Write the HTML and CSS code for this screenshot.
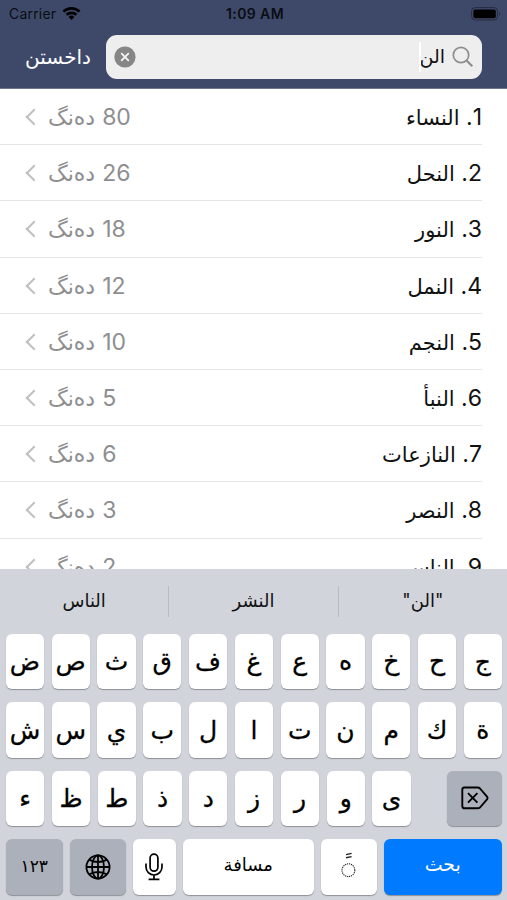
FILE: index.html
```
<!DOCTYPE html>
<html lang="ckb" dir="rtl">
<head>
  <meta charset="utf-8">
  <title>Search</title>
  <link rel="stylesheet" href="styles.css">
</head>
<body>
  <div class="phone">
    <!-- Header: status bar and search -->
    <header>
      <div class="status" dir="ltr">
        <div class="carrier">
          <span>Carrier</span>
          <svg width="19" height="15" viewBox="0 0 19 15">
            <path d="M9.5 14 L6.6 10.9 A4.2 4.2 0 0 1 12.4 10.9 Z" fill="#000"/>
            <path d="M4.6 8.8 A7 7 0 0 1 14.4 8.8" fill="none" stroke="#000" stroke-width="2.7"/>
            <path d="M1.5 5.6 A11.4 11.4 0 0 1 17.5 5.6" fill="none" stroke="#000" stroke-width="2.7"/>
          </svg>
        </div>
        <div class="time">1:09 AM</div>
        <div class="battery">
          <svg width="30" height="14" viewBox="0 0 30 14">
            <rect x="0.6" y="0.6" width="26" height="12.4" rx="3.6" fill="none" stroke="#252b40"/>
            <rect x="2.4" y="2.4" width="22.4" height="8.8" rx="1.8" fill="#000"/>
            <path d="M28 4.8 Q29.6 6.8 28 8.8 Z" fill="#252b40"/>
          </svg>
        </div>
      </div>
      <div class="search">
        <div class="field">
          <svg class="glass" width="22" height="22" viewBox="0 0 22 22">
            <circle cx="9" cy="9" r="7.7" fill="none" stroke="#8e8e90" stroke-width="1.7"/>
            <path d="M14.5 14.5 L20.3 20.3" stroke="#8e8e90" stroke-width="2.2"/>
          </svg>
          <span class="query">الن</span>
          <span class="caret"></span>
          <svg class="clear" width="22" height="22" viewBox="0 0 22 22">
            <circle cx="11" cy="11" r="10.6" fill="#868686"/>
            <path d="M7.2 7.2 L14.8 14.8 M14.8 7.2 L7.2 14.8" stroke="#f4f4f4" stroke-width="1.8"/>
          </svg>
        </div>
        <span class="cancel">داخستن</span>
      </div>
    </header>

    <!-- Results -->
    <ul class="list">
      <li><span>1. <b>النساء</b></span><span class="count">80 <b>دەنگ</b></span></li>
      <li><span>2. <b>النحل</b></span><span class="count">26 <b>دەنگ</b></span></li>
      <li><span>3. <b>النور</b></span><span class="count">18 <b>دەنگ</b></span></li>
      <li><span>4. <b>النمل</b></span><span class="count">12 <b>دەنگ</b></span></li>
      <li><span>5. <b>النجم</b></span><span class="count">10 <b>دەنگ</b></span></li>
      <li><span>6. <b>النبأ</b></span><span class="count">5 <b>دەنگ</b></span></li>
      <li><span>7. <b>النازعات</b></span><span class="count">6 <b>دەنگ</b></span></li>
      <li><span>8. <b>النصر</b></span><span class="count">3 <b>دەنگ</b></span></li>
      <li><span>9. <b>الناس</b></span><span class="count">2 <b>دەنگ</b></span></li>
    </ul>

    <!-- Keyboard -->
    <div class="keyboard">
      <div class="suggestions">
        <span>"الن"</span><span>النشر</span><span>الناس</span>
      </div>
      <div class="keys">
        <i>ج</i><i>ح</i><i>خ</i><i>ه</i><i>ع</i><i>غ</i><i>ف</i><i>ق</i><i>ث</i><i>ص</i><i>ض</i>
      </div>
      <div class="keys">
        <i>ة</i><i>ك</i><i>م</i><i>ن</i><i>ت</i><i>ا</i><i>ل</i><i>ب</i><i>ي</i><i>س</i><i>ش</i>
      </div>
      <div class="keys">
        <i class="dark delete">
          <svg width="28" height="24" viewBox="0 0 28 24" fill="none" stroke="#000" stroke-width="1.9" stroke-linejoin="round">
            <path d="M3.5 1.5 H16.5 Q18 1.5 19 2.5 L26 10.6 Q27 12 26 13.4 L19 21.5 Q18 22.3 16.5 22.3 H3.5 Q1.3 22.3 1.3 20 V3.8 Q1.3 1.5 3.5 1.5 Z"/>
            <path d="M7 7.2 L16.4 16.6 M16.4 7.2 L7 16.6"/>
          </svg>
        </i>
        <i>ى</i><i>و</i><i>ر</i><i>ز</i><i>د</i><i>ذ</i><i>ط</i><i>ظ</i><i>ء</i>
      </div>
      <div class="keys bottom">
        <i class="go">بحث</i>
        <i class="marks">
          <svg width="16" height="30" viewBox="0 0 16 30" fill="none" stroke="#222">
            <path d="M5 2.6 L10.6 1.4 M5 5.8 L10.6 4.6" stroke-width="1.4"/>
            <circle cx="7.4" cy="18.2" r="6.4" stroke-width="1.1" stroke-dasharray="1.2 0.8"/>
          </svg>
        </i>
        <i class="space">مسافة</i>
        <i class="mic">
          <svg width="18" height="28" viewBox="0 0 18 28" fill="none" stroke="#000" stroke-width="1.7">
            <rect x="5.1" y="1.2" width="7.8" height="17" rx="3.9"/>
            <path d="M1 10.4 V14 A8 8 0 0 0 17 14 V10.4 M9 22 V26.4 M3.6 26.4 H14.4"/>
          </svg>
        </i>
        <i class="dark globe">
          <svg width="26" height="26" viewBox="0 0 26 26" fill="none" stroke="#000" stroke-width="1.8">
            <circle cx="13" cy="13" r="11.6"/>
            <ellipse cx="13" cy="13" rx="6" ry="11.6"/>
            <path d="M13 1.4 V24.6 M1.4 13 H24.6 M4 5.6 Q13 10.4 22 5.6 M4 20.4 Q13 15.6 22 20.4"/>
          </svg>
        </i>
        <i class="dark numbers">١٢٣</i>
      </div>
    </div>
  </div>
</body>
</html>
```

FILE: styles.css
```
* { box-sizing: border-box; }
body { margin: 0; font-family: Inter, "DejaVu Sans", sans-serif; color: #111; }
svg { display: block; flex: none; }
.phone { width: 507px; height: 900px; overflow: hidden; display: flex; flex-direction: column; background: #fff; }

/* Header */
header { height: 89px; flex: none; background: #3e4969; border-bottom: 1px solid #6d7690; }
.status { display: grid; grid-template-columns: 1fr auto 1fr; align-items: center; height: 27px; padding: 0 6px 0 9px; font-size: 14px; color: #0b0d14; }
.carrier { display: flex; align-items: center; gap: 6px; letter-spacing: 0.2px; }
.time { font-weight: 600; letter-spacing: 0.4px; }
.battery { display: flex; justify-content: flex-end; }
.search { display: flex; align-items: center; margin-top: 8px; padding: 0 25px; }
.field { display: flex; align-items: center; width: 376px; height: 44px; padding: 0 8px 0 8px; border-radius: 11px; background: #eee; }
.query { margin-right: 7px; font-size: 19px; line-height: 40px; }
.caret { width: 2px; height: 30px; margin-right: -2px; background: #fff; }
.clear { margin-right: auto; }
.cancel { margin-right: 15px; font-size: 20px; line-height: 40px; color: #fff; }

/* Results list */
.list { flex: 1; min-height: 0; overflow: hidden; margin: 0; padding: 0; list-style: none; }
.list li { display: flex; justify-content: space-between; align-items: center; height: 56.2px; margin-right: 25px; padding: 1px 0 0 28px; border-bottom: 1px solid #e6e6e6; font-size: 23px; }
.list b { font-weight: normal; font-size: 21px; }
.count { display: flex; align-items: center; gap: 6px; color: #8e8e90; }
.list .count b { margin-right: 1px; font-size: 22px; }
.count::after { content: ""; width: 10px; height: 10px; margin-right: 2px; border-left: 2px solid #c0c0c2; border-bottom: 2px solid #c0c0c2; transform: rotate(45deg); }

/* Keyboard */
.keyboard { flex: none; height: 331px; padding: 0 5px 0 6px; background: #d1d4da; }
.suggestions { display: flex; align-items: center; height: 64.5px; margin: 0 -5px 0 -6px; font-size: 18px; }
.suggestions span { flex: 1; height: 31px; line-height: 30px; text-align: center; }
.suggestions span:not(:last-child) { border-left: 1px solid #b9bcc3; }
.keys { display: flex; gap: 7.5px; height: 55.5px; margin-bottom: 13px; }
.keys i { flex: none; width: 38.3px; display: flex; align-items: center; justify-content: center; border-radius: 6px; background: #fff; box-shadow: 0 1px 1px #8d9096; font-style: normal; font-size: 25px; color: #000; -webkit-text-stroke: 0.3px; }
.keys .dark { background: #abb0ba; }
.keys .delete { width: 55px; margin-left: auto; }
.bottom { gap: 7px; }
.bottom .go { width: 118.5px; padding-bottom: 4px; background: #007aff; color: #fff; font-size: 19px; -webkit-text-stroke: 0; }
.bottom .marks { width: 55.5px; }
.bottom .space { width: 131.5px; padding-bottom: 4px; font-size: 18px; -webkit-text-stroke: 0; }
.bottom .mic { width: 42.5px; }
.bottom .globe { width: 56.5px; }
.bottom .numbers { width: 56.5px; padding-bottom: 2px; font-size: 17px; -webkit-text-stroke: 0; }
```
